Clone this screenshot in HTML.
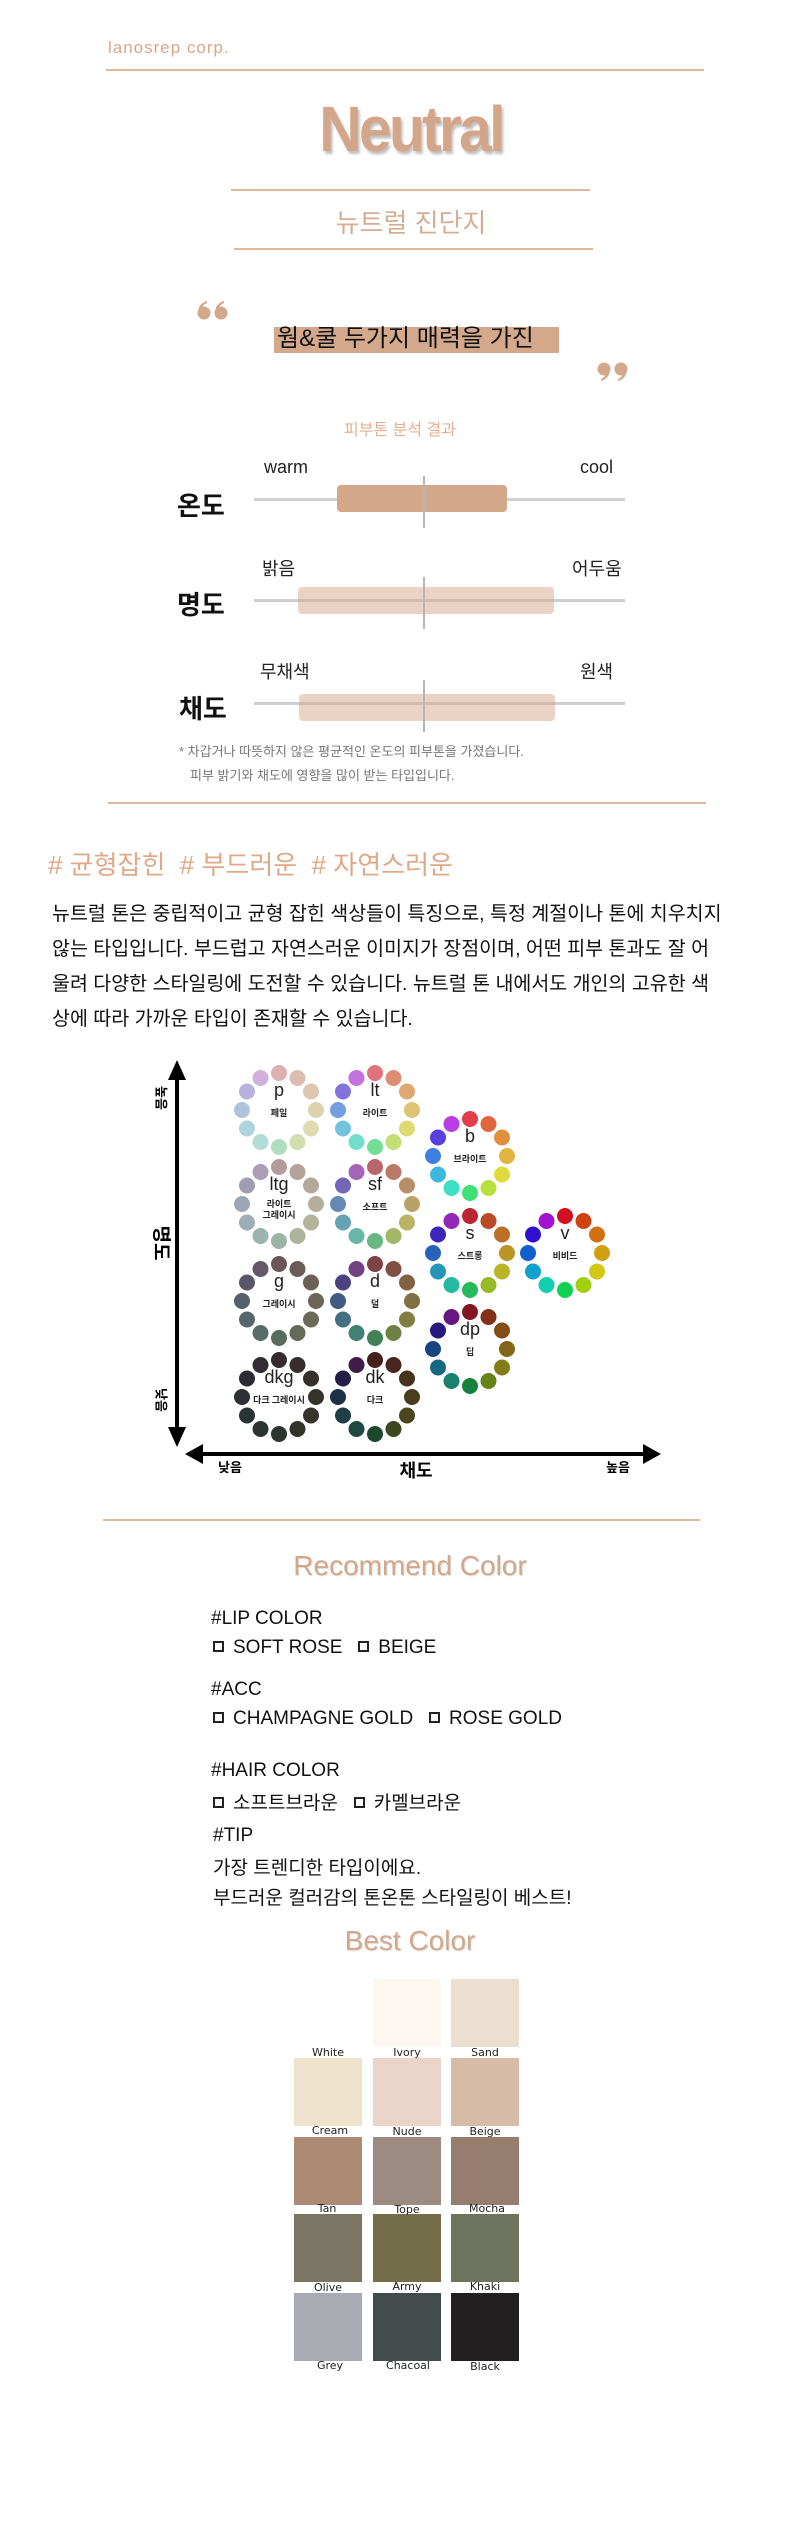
<!DOCTYPE html>
<html><head><meta charset="utf-8"><style>
*{margin:0;padding:0;box-sizing:border-box}
body{width:800px;height:2527px;background:#fff;position:relative;overflow:hidden;font-family:"Liberation Sans","Noto Sans CJK KR",sans-serif;color:#111}
.a{position:absolute;white-space:nowrap}
.hl{position:absolute;height:2px;background:#dfb99c}
.c{text-align:center}
.tan{color:#d4a88a}
.gl{position:absolute;height:3px;background:#cfcfcf}
.vl{position:absolute;width:2px;background:#b5b5b5}
.lbl{font-size:26px;font-weight:bold;color:#111}
.sm{font-size:18px;color:#222}
.rc{font-size:19px;color:#111}
.sq{display:inline-block;width:11px;height:11px;border:2px solid #222;margin-right:9px;vertical-align:1px}
.sw{position:absolute;width:68px;height:68px}
.sl{position:absolute;width:68px;text-align:center;font-size:11px;color:#222;font-family:"DejaVu Sans",sans-serif}
</style></head><body>

<div class="a tan" style="left:108px;top:38px;font-size:17px;letter-spacing:1px;color:#d3a88c">lanosrep corp.</div>
<div class="hl" style="left:106px;top:69px;width:598px"></div>

<div class="a c" style="left:0;width:822px;top:92px;font-size:64px;font-weight:bold;color:#d3a68a;text-shadow:2px 3px 3px rgba(0,0,0,0.25);letter-spacing:-3px;transform:scaleX(0.92)">Neutral</div>
<div class="hl" style="left:231px;top:189px;width:359px"></div>
<div class="a c" style="left:0;width:822px;top:203px;font-size:26px;color:#d6ad92">뉴트럴 진단지</div>
<div class="hl" style="left:234px;top:248px;width:359px"></div>

<svg class="a" style="left:197px;top:300px" width="32" height="20" viewBox="0 0 32 20">
 <circle cx="7" cy="13" r="6.5" fill="#d4a88a"/><path d="M1 12 Q2 3 10 1 L10 3 Q5 5 4 11 Z" fill="#d4a88a"/>
 <circle cx="24" cy="13" r="6.5" fill="#d4a88a"/><path d="M18 12 Q19 3 27 1 L27 3 Q22 5 21 11 Z" fill="#d4a88a"/>
</svg>
<div class="a" style="left:274px;top:327px;width:285px;height:26px;background:#d4a88a"></div>
<div class="a" style="left:277px;top:322px;font-size:24px;color:#111;line-height:34px">웜&amp;쿨 두가지 매력을 가진</div>
<svg class="a" style="left:596px;top:362px" width="32" height="20" viewBox="0 0 32 20">
 <circle cx="8" cy="7" r="6.5" fill="#d4a88a"/><path d="M14 8 Q13 17 5 19 L5 17 Q10 15 11 9 Z" fill="#d4a88a"/>
 <circle cx="25" cy="7" r="6.5" fill="#d4a88a"/><path d="M31 8 Q30 17 22 19 L22 17 Q27 15 28 9 Z" fill="#d4a88a"/>
</svg>

<div class="a c" style="left:0;width:800px;top:416px;font-size:16px;color:#e5b092">피부톤 분석 결과</div>

<div class="a sm" style="left:264px;top:457px">warm</div>
<div class="a sm" style="left:580px;top:457px">cool</div>
<div class="a lbl" style="left:177px;top:486px">온도</div>
<div class="gl" style="left:254px;top:498px;width:371px"></div>
<div class="a" style="left:337px;top:485px;width:170px;height:27px;background:#d3a88a;border-radius:4px"></div>
<div class="vl" style="left:423px;top:476px;height:52px"></div>

<div class="a sm" style="left:262px;top:555px">밝음</div>
<div class="a sm" style="left:572px;top:555px">어두움</div>
<div class="a lbl" style="left:177px;top:585px">명도</div>
<div class="gl" style="left:254px;top:599px;width:371px"></div>
<div class="a" style="left:298px;top:587px;width:256px;height:27px;background:rgba(214,168,138,0.5);border-radius:4px"></div>
<div class="vl" style="left:423px;top:577px;height:52px"></div>

<div class="a sm" style="left:260px;top:658px">무채색</div>
<div class="a sm" style="left:580px;top:658px">원색</div>
<div class="a lbl" style="left:179px;top:689px">채도</div>
<div class="gl" style="left:254px;top:702px;width:371px"></div>
<div class="a" style="left:299px;top:694px;width:256px;height:27px;background:rgba(214,168,138,0.5);border-radius:4px"></div>
<div class="vl" style="left:423px;top:680px;height:52px"></div>

<div class="a" style="left:179px;top:741px;font-size:13px;color:#777">* 차갑거나 따뜻하지 않은 평균적인 온도의 피부톤을 가졌습니다.</div>
<div class="a" style="left:190px;top:765px;font-size:13px;color:#777">피부 밝기와 채도에 영향을 많이 받는 타입입니다.</div>
<div class="hl" style="left:108px;top:802px;width:598px"></div>

<div class="a" style="left:48px;top:845px;font-size:26px;color:#e0a887">#&nbsp;균형잡힌&nbsp;&nbsp;#&nbsp;부드러운&nbsp;&nbsp;#&nbsp;자연스러운</div>
<div class="a" style="left:52px;top:897px;font-size:19.5px;line-height:35px;color:#111">뉴트럴 톤은 중립적이고 균형 잡힌 색상들이 특징으로, 특정 계절이나 톤에 치우치지<br>않는 타입입니다. 부드럽고 자연스러운 이미지가 장점이며, 어떤 피부 톤과도 잘 어<br>울려 다양한 스타일링에 도전할 수 있습니다. 뉴트럴 톤 내에서도 개인의 고유한 색<br>상에 따라 가까운 타입이 존재할 수 있습니다.</div>

<svg class="a" style="left:0;top:1040px" width="800" height="450" viewBox="0 1040 800 450">
 <line x1="177" y1="1075" x2="177" y2="1432" stroke="#000" stroke-width="4"/>
 <polygon points="177,1060 168,1080 186,1080" fill="#000"/>
 <polygon points="177,1447 168,1427 186,1427" fill="#000"/>
 <line x1="200" y1="1454" x2="645" y2="1454" stroke="#000" stroke-width="4"/>
 <polygon points="185,1454 203,1444 203,1464" fill="#000"/>
 <polygon points="661,1454 643,1444 643,1464" fill="#000"/>
 <g id="wheels"></g>
 <text x="160" y="1098" font-size="13" font-weight="bold" transform="rotate(90 160 1098)" text-anchor="middle" dominant-baseline="middle" font-family="Liberation Sans,Noto Sans CJK KR,sans-serif">높음</text>
 <text x="160" y="1243" font-size="19" font-weight="bold" transform="rotate(90 160 1243)" text-anchor="middle" dominant-baseline="middle" font-family="Liberation Sans,Noto Sans CJK KR,sans-serif">명도</text>
 <text x="160" y="1400" font-size="13" font-weight="bold" transform="rotate(90 160 1400)" text-anchor="middle" dominant-baseline="middle" font-family="Liberation Sans,Noto Sans CJK KR,sans-serif">낮음</text>
 <text x="230" y="1472" font-size="13" font-weight="bold" text-anchor="middle" font-family="Liberation Sans,Noto Sans CJK KR,sans-serif">낮음</text>
 <text x="416" y="1477" font-size="18" font-weight="bold" text-anchor="middle" font-family="Liberation Sans,Noto Sans CJK KR,sans-serif">채도</text>
 <text x="618" y="1472" font-size="13" font-weight="bold" text-anchor="middle" font-family="Liberation Sans,Noto Sans CJK KR,sans-serif">높음</text>
</svg>
<script>
(function(){
var W=[
 ["p","페일",279,1110,40,78],["lt","라이트",375,1110,62,66],["b","브라이트",470,1156,72,56],
 ["ltg","라이트|그레이시",279,1204,14,66],["sf","소프트",375,1204,36,56],["s","스트롱",470,1253,66,44],
 ["v","비비드",565,1253,85,44],["g","그레이시",279,1301,10,38],["d","덜",375,1301,32,38],
 ["dp","딥",470,1349,70,30],["dkg","다크 그레이시",279,1397,10,19],["dk","다크",375,1397,42,20]];
var H=[355,15,30,45,58,75,140,170,195,215,250,285];
var s="";
W.forEach(function(w){
 for(var i=0;i<12;i++){var a=i*Math.PI/6;var x=w[2]+37*Math.sin(a),y=w[3]-37*Math.cos(a);
  s+='<circle cx="'+x.toFixed(1)+'" cy="'+y.toFixed(1)+'" r="8" fill="hsl('+H[i]+','+w[4]+'%,'+w[5]+'%)"/>';}
 s+='<text x="'+w[2]+'" y="'+(w[3]-14)+'" font-size="18" text-anchor="middle" fill="#222" font-family="Liberation Sans,sans-serif">'+w[0]+'</text>';
 var p=w[1].split("|");
 p.forEach(function(t,k){s+='<text x="'+w[2]+'" y="'+(w[3]+6+k*11-(p.length-1)*3)+'" font-size="9" font-weight="bold" text-anchor="middle" fill="#222" font-family="Noto Sans CJK KR,sans-serif">'+t+'</text>';});
});
document.getElementById("wheels").innerHTML=s;
})();
</script>

<div class="hl" style="left:103px;top:1519px;width:597px"></div>
<div class="a c" style="left:0;width:820px;top:1550px;font-size:28px;color:#d3a88a;text-shadow:1px 1px 1px rgba(0,0,0,0.15)">Recommend Color</div>

<div class="a rc" style="left:211px;top:1608px">#LIP COLOR</div>
<div class="a rc" style="left:213px;top:1637px"><span class="sq"></span>SOFT ROSE &nbsp;&nbsp;<span class="sq"></span>BEIGE</div>
<div class="a rc" style="left:211px;top:1679px">#ACC</div>
<div class="a rc" style="left:213px;top:1708px"><span class="sq"></span>CHAMPAGNE GOLD &nbsp;&nbsp;<span class="sq"></span>ROSE GOLD</div>
<div class="a rc" style="left:211px;top:1760px">#HAIR COLOR</div>
<div class="a rc" style="left:213px;top:1788px"><span class="sq"></span>소프트브라운 &nbsp;&nbsp;<span class="sq"></span>카멜브라운</div>
<div class="a rc" style="left:213px;top:1825px">#TIP</div>
<div class="a rc" style="left:213px;top:1853px">가장 트렌디한 타입이에요.</div>
<div class="a rc" style="left:213px;top:1883px">부드러운 컬러감의 톤온톤 스타일링이 베스트!</div>

<div class="a c" style="left:0;width:820px;top:1925px;font-size:28px;color:#d3a88a;text-shadow:1px 1px 1px rgba(0,0,0,0.15)">Best Color</div>

<div class="sw" style="left:373px;top:1979px;background:#fcf8f1"></div>
<div class="sw" style="left:451px;top:1979px;background:#ebdfcf"></div>
<div class="sw" style="left:294px;top:2058px;background:#ede2cc"></div>
<div class="sw" style="left:373px;top:2058px;background:#ead5c8"></div>
<div class="sw" style="left:451px;top:2058px;background:#d6bca6"></div>
<div class="sw" style="left:294px;top:2137px;background:#ab8b76"></div>
<div class="sw" style="left:373px;top:2137px;background:#9d8a80"></div>
<div class="sw" style="left:451px;top:2137px;background:#977d6e"></div>
<div class="sw" style="left:294px;top:2214px;background:#7b7563"></div>
<div class="sw" style="left:373px;top:2214px;background:#736e49"></div>
<div class="sw" style="left:451px;top:2214px;background:#6f745f"></div>
<div class="sw" style="left:294px;top:2293px;background:#a8abb1"></div>
<div class="sw" style="left:373px;top:2293px;background:#444b4d"></div>
<div class="sw" style="left:451px;top:2293px;background:#231f20"></div>

<div class="sl" style="left:294px;top:2046px">White</div>
<div class="sl" style="left:373px;top:2046px">Ivory</div>
<div class="sl" style="left:451px;top:2046px">Sand</div>
<div class="sl" style="left:296px;top:2124px">Cream</div>
<div class="sl" style="left:373px;top:2125px">Nude</div>
<div class="sl" style="left:451px;top:2125px">Beige</div>
<div class="sl" style="left:293px;top:2202px">Tan</div>
<div class="sl" style="left:373px;top:2203px">Tope</div>
<div class="sl" style="left:453px;top:2202px">Mocha</div>
<div class="sl" style="left:294px;top:2281px">Olive</div>
<div class="sl" style="left:373px;top:2280px">Army</div>
<div class="sl" style="left:451px;top:2280px">Khaki</div>
<div class="sl" style="left:296px;top:2359px">Grey</div>
<div class="sl" style="left:374px;top:2359px">Chacoal</div>
<div class="sl" style="left:451px;top:2360px">Black</div>

</body></html>
